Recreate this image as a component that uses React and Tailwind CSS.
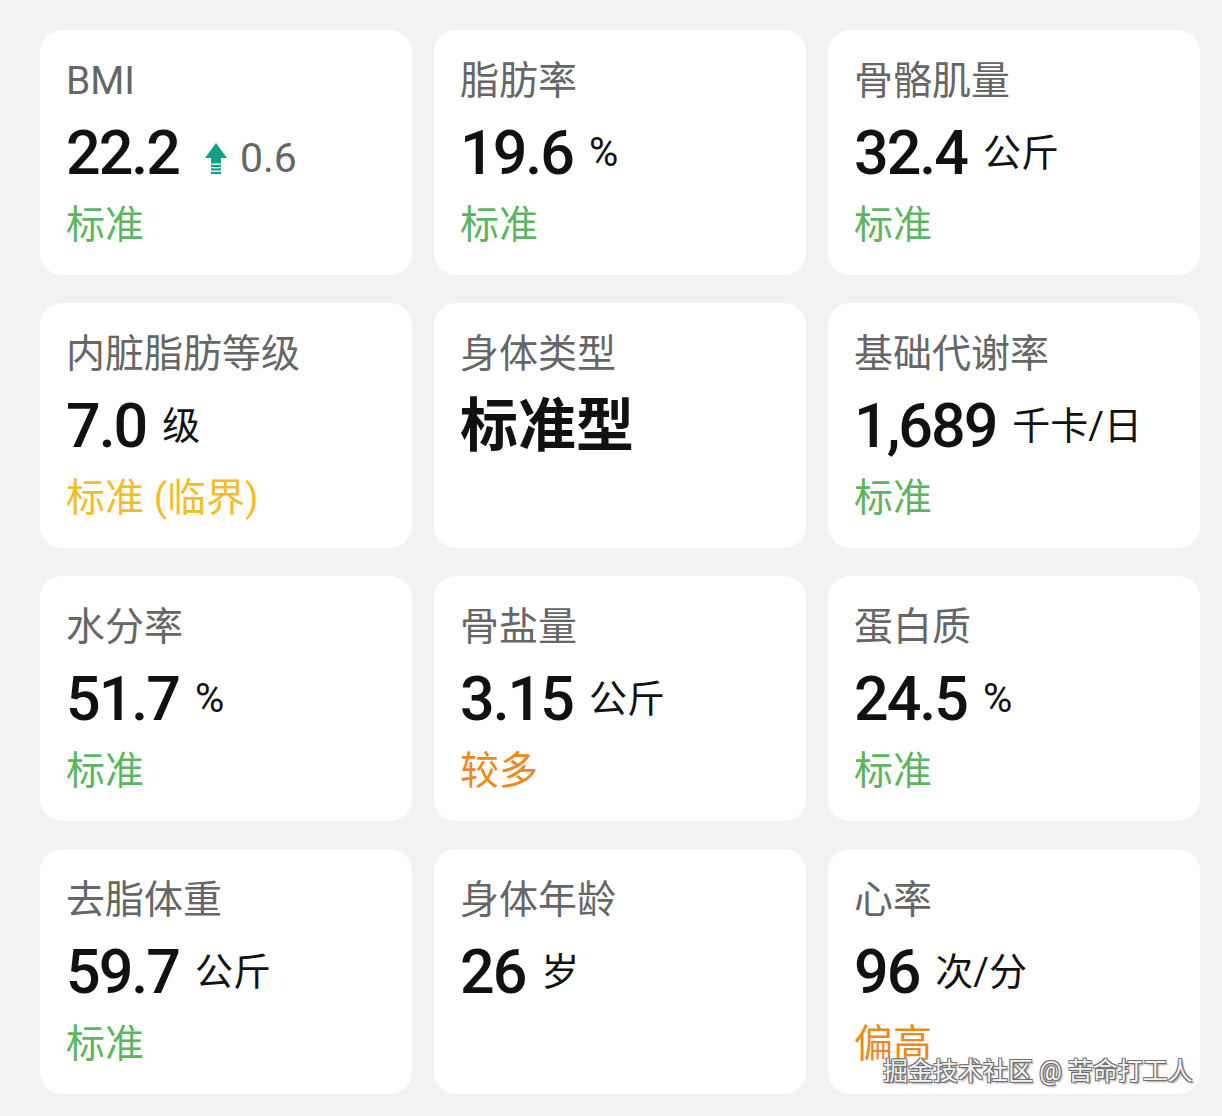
import React from "react";

const GREEN = "text-[#5db65f]";
const YELLOW = "text-[#f3bd2a]";
const ORANGE = "text-[#ec8a21]";

function UpArrow() {
  return (
    <svg width="22" height="31" viewBox="0 0 22 31" className="block">
      <polygon points="11,0 22,15 0,15" fill="#139f82" />
      <rect x="6" y="14" width="10" height="6.5" fill="#139f82" />
      <rect x="6" y="21.8" width="10" height="2.2" fill="#139f82" />
      <rect x="6" y="25.3" width="10" height="2.2" fill="#139f82" />
      <rect x="6" y="28.8" width="10" height="2.2" fill="#139f82" />
    </svg>
  );
}

const cards = [
  { title: "BMI", value: "22.2", delta: "0.6", status: "标准", color: GREEN },
  { title: "脂肪率", value: "19.6", unit: "%", status: "标准", color: GREEN },
  { title: "骨骼肌量", value: "32.4", unit: "公斤", status: "标准", color: GREEN },
  { title: "内脏脂肪等级", value: "7.0", unit: "级", status: "标准 (临界)", color: YELLOW },
  { title: "身体类型", big: "标准型" },
  { title: "基础代谢率", value: "1,689", unit: "千卡/日", status: "标准", color: GREEN },
  { title: "水分率", value: "51.7", unit: "%", status: "标准", color: GREEN },
  { title: "骨盐量", value: "3.15", unit: "公斤", status: "较多", color: ORANGE },
  { title: "蛋白质", value: "24.5", unit: "%", status: "标准", color: GREEN },
  { title: "去脂体重", value: "59.7", unit: "公斤", status: "标准", color: GREEN },
  { title: "身体年龄", value: "26", unit: "岁" },
  { title: "心率", value: "96", unit: "次/分", status: "偏高", color: ORANGE },
];

function Card({ c }) {
  return (
    <div className="bg-white rounded-[22px] pl-[26px] pt-[15px] flex flex-col">
      <div className="h-[72px] flex items-center text-[39px] text-[#666666] leading-none">
        {c.title}
      </div>
      {c.big ? (
        <div className="h-[72px] flex items-center text-[58px] font-bold text-[#111] leading-none">
          {c.big}
        </div>
      ) : (
        <div className="h-[72px] flex items-center leading-none">
          <span className="text-[61px] font-medium text-[#111] tracking-[-2px]">{c.value}</span>
          {c.unit && (
            <span
              className={
                c.unit === "%"
                  ? "ml-[16px] text-[40px] text-[#111]"
                  : "ml-[16px] text-[38px] text-[#111]"
              }
            >
              {c.unit}
            </span>
          )}
          {c.delta && (
            <span className="ml-[26px] mt-[10px] flex items-center gap-[13px]">
              <UpArrow />
              <span className="text-[41px] text-[#666666]">{c.delta}</span>
            </span>
          )}
        </div>
      )}
      {c.status && (
        <div className={`h-[72px] flex items-center text-[39px] leading-none ${c.color}`}>
          {c.status}
        </div>
      )}
    </div>
  );
}

export default function App() {
  return (
    <div
      className="relative w-[1222px] h-[1116px] bg-[#f1f2f4] pt-[30px] pl-[40px] pr-[22px] overflow-hidden"
      style={{ fontFamily: "Roboto, 'Noto Sans CJK SC', sans-serif" }}
    >
      <div className="grid grid-cols-3 gap-x-[22px] gap-y-[28px] auto-rows-[245px]">
        {cards.map((c, i) => (
          <Card key={i} c={c} />
        ))}
      </div>
      <div className="absolute left-[883px] top-[1059px] text-[25px] leading-none text-[#f4f4f4] whitespace-nowrap [text-shadow:-1px_-1px_0_#6f6f6f,1px_-1px_0_#6f6f6f,-1px_1px_0_#6f6f6f,1px_1px_0_#6f6f6f,2px_2px_2px_#9a9a9a]">
        掘金技术社区 @ 苦命打工人
      </div>
    </div>
  );
}
